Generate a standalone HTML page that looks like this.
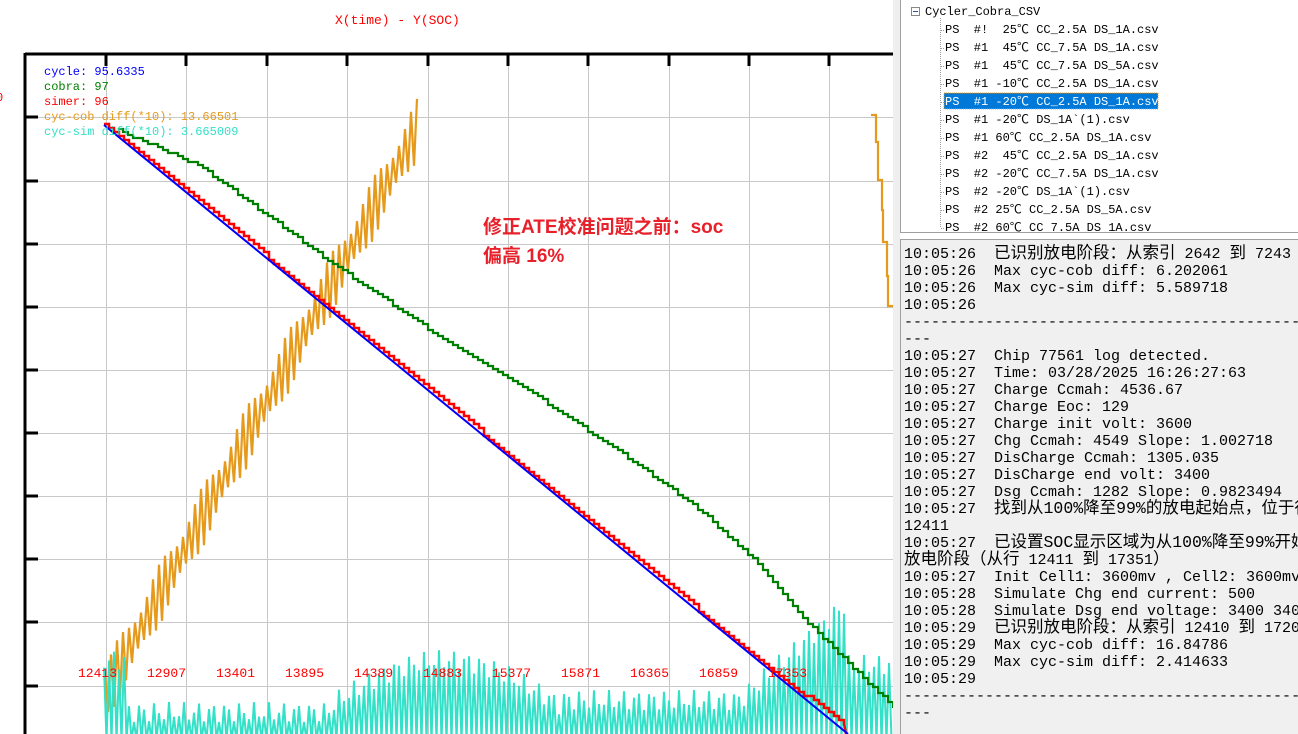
<!DOCTYPE html>
<html><head><meta charset="utf-8">
<style>
html,body{margin:0;padding:0;width:1298px;height:734px;overflow:hidden;background:#fff;position:relative}
.mono{font-family:"Liberation Mono","Noto Sans CJK SC",monospace}
#tree{position:absolute;left:900px;top:0;width:398px;height:232px;border-left:1px solid #a0a0a0;border-bottom:1px solid #a0a0a0;background:#fff;overflow:hidden}
#tree div{position:absolute;font-size:12px;line-height:16px;white-space:pre;color:#000}
#log{position:absolute;left:900px;top:239px;width:398px;height:495px;border-left:1px solid #a0a0a0;border-top:1px solid #a0a0a0;background:#f0f0f0;overflow:hidden}
#log pre{margin:0;position:absolute;left:3px;top:6px;font-size:15px;line-height:17px;color:#000;font-family:"Liberation Mono","Noto Sans CJK SC",monospace}
#log pre span{font-size:16.5px;line-height:0}
#strip{position:absolute;left:893px;top:0;width:7px;height:734px;background:#efefef}
</style></head><body>
<svg id="chart" width="893" height="734" style="position:absolute;left:0;top:0" xmlns="http://www.w3.org/2000/svg">
<g id="grid" stroke="#c8c8c8" stroke-width="1"></g>
<g id="data"></g>
<line x1="25" y1="54" x2="893" y2="54" stroke="#000" stroke-width="3"/>
<line x1="25" y1="53" x2="25" y2="734" stroke="#000" stroke-width="3"/>
<g id="ticks" stroke="#000" stroke-width="3"></g>
<text x="335" y="24" fill="#ff0000" font-family="Liberation Mono,monospace" font-size="13">X(time) - Y(SOC)</text>
<text x="-4" y="101" fill="#ff0000" font-family="Liberation Mono,monospace" font-size="12">0</text>
<g font-family="Liberation Mono,monospace" font-size="12">
<text x="44" y="75" fill="#0000ff">cycle: 95.6335</text>
<text x="44" y="90" fill="#008000">cobra: 97</text>
<text x="44" y="105" fill="#ff0000">simer: 96</text>
<text x="44" y="120" fill="#e59a1c">cyc-cob diff(*10): 13.66501</text>
<text x="44" y="135" fill="#33e0c8">cyc-sim diff(*10): 3.665009</text>
</g>
<g id="xl" font-family="Liberation Mono,monospace" font-size="13" fill="#ff0000"></g>
<text x="483" y="233" fill="#e8202a" font-family="Liberation Sans,Noto Sans CJK SC,sans-serif" font-weight="bold" font-size="19">修正ATE校准问题之前：soc</text>
<text x="483" y="262" fill="#e8202a" font-family="Liberation Sans,Noto Sans CJK SC,sans-serif" font-weight="bold" font-size="19">偏高 16%</text>
</svg>
<div id="strip"></div>
<div id="tree" class="mono">
<svg width="398" height="232" style="position:absolute;left:0;top:0">
<rect x="10.5" y="7.5" width="8" height="8" fill="#fff" stroke="#888"/>
<line x1="12" y1="11.5" x2="17" y2="11.5" stroke="#3050a0"/>
<line x1="39.5" y1="18" x2="39.5" y2="227" stroke="#a0a0a0" stroke-dasharray="1,1"/>
<g id="tl" stroke="#a0a0a0" stroke-dasharray="1,1"></g>
<rect x="43" y="93" width="214" height="16" fill="#0078d7" stroke="#e0a040" stroke-dasharray="1,1"/>
</svg>
<div style="left:24px;top:4px">Cycler_Cobra_CSV</div>
<div style="left:44px;top:22px">PS  #!  25℃ CC_2.5A DS_1A.csv</div>
<div style="left:44px;top:40px">PS  #1  45℃ CC_7.5A DS_1A.csv</div>
<div style="left:44px;top:58px">PS  #1  45℃ CC_7.5A DS_5A.csv</div>
<div style="left:44px;top:76px">PS  #1 -10℃ CC_2.5A DS_1A.csv</div>
<div style="left:44px;top:94px;color:#fff">PS  #1 -20℃ CC_2.5A DS_1A.csv</div>
<div style="left:44px;top:112px">PS  #1 -20℃ DS_1A`(1).csv</div>
<div style="left:44px;top:130px">PS  #1 60℃ CC_2.5A DS_1A.csv</div>
<div style="left:44px;top:148px">PS  #2  45℃ CC_2.5A DS_1A.csv</div>
<div style="left:44px;top:166px">PS  #2 -20℃ CC_7.5A DS_1A.csv</div>
<div style="left:44px;top:184px">PS  #2 -20℃ DS_1A`(1).csv</div>
<div style="left:44px;top:202px">PS  #2 25℃ CC_2.5A DS_5A.csv</div>
<div style="left:44px;top:220px">PS  #2 60℃ CC 7.5A DS 1A.csv</div>
</div>
<div id="log"><pre>10:05:26  <span>已识别放电阶段：从索引</span> 2642 <span>到</span> 7243
10:05:26  Max cyc-cob diff: 6.202061
10:05:26  Max cyc-sim diff: 5.589718
10:05:26
--------------------------------------------------
---
10:05:27  Chip 77561 log detected.
10:05:27  Time: 03/28/2025 16:26:27:63
10:05:27  Charge Ccmah: 4536.67
10:05:27  Charge Eoc: 129
10:05:27  Charge init volt: 3600
10:05:27  Chg Ccmah: 4549 Slope: 1.002718
10:05:27  DisCharge Ccmah: 1305.035
10:05:27  DisCharge end volt: 3400
10:05:27  Dsg Ccmah: 1282 Slope: 0.9823494
10:05:27  <span>找到从100%降至99%的放电起始点，位于行</span>
12411
10:05:27  <span>已设置SOC显示区域为从100%降至99%开始</span>
<span>放电阶段（从行</span> 12411 <span>到</span> 17351<span>）</span>
10:05:27  Init Cell1: 3600mv , Cell2: 3600mv
10:05:28  Simulate Chg end current: 500
10:05:28  Simulate Dsg end voltage: 3400 3400
10:05:29  <span>已识别放电阶段：从索引</span> 12410 <span>到</span> 17200
10:05:29  Max cyc-cob diff: 16.84786
10:05:29  Max cyc-sim diff: 2.414633
10:05:29
--------------------------------------------------
---</pre></div>
<script>
var NS="http://www.w3.org/2000/svg";
function el(p,t,a){var e=document.createElementNS(NS,t);for(var k in a)e.setAttribute(k,a[k]);p.appendChild(e);return e;}
var g=document.getElementById('grid'),tk=document.getElementById('ticks'),d=document.getElementById('data');
var ys=[117,181,244,307,370,433,496,559,622,686],xs=[106,186,267,347,428,508,588,669,749,829];
ys.forEach(function(y){el(g,'line',{x1:25,y1:y+.5,x2:893,y2:y+.5});el(tk,'line',{x1:25,y1:y,x2:38,y2:y});});
xs.forEach(function(x){el(g,'line',{x1:x+.5,y1:54,x2:x+.5,y2:734});el(tk,'line',{x1:x,y1:54,x2:x,y2:66});});
var xl=document.getElementById('xl');
['12413','12907','13401','13895','14389','14883','15377','15871','16365','16859','17353'].forEach(function(s,i){var t=el(xl,'text',{x:78+i*69,y:677});t.textContent=s;});
var p=[];for(var x=105;x<=418;x+=3){var f=(x-105)/313;var b=690-f*565;var a=((x/3)%2==0)?26:-20;var w=Math.sin(x*0.9)*8;p.push(x+','+(b+a+w));}
el(d,'polyline',{points:p.join(' '),fill:'none',stroke:'#e59a1c','stroke-width':2.2});
el(d,'polyline',{points:'871,115 876,115 876,142 878,142 878,180 882,180 882,210 883,210 883,242 887,242 887,276 888,276 888,306 893,306',fill:'none',stroke:'#e59a1c','stroke-width':2.2});
function peak(x){if(x<125)return 660;if(x<330)return 712;if(x<560)return 705-Math.sin((x-330)/230*Math.PI)*45;if(x<740)return 700;if(x<845)return 700-(x-740)/105*95;return 665;}
p=[];for(var x=104;x<=893;x+=2.5){var up=(Math.round(x/2.5)%2==0);var pk=peak(x)+Math.sin(x*1.7)*10;p.push(x+','+(up?pk:740));}
el(d,'polyline',{points:p.join(' '),fill:'none',stroke:'#33e0c8','stroke-width':2});
var gp=[[118,130],[200,166],[260,210],[330,262],[430,330],[520,385],[620,452],[700,510],[760,565],[810,625],[850,665],[893,707]];
function interp(pts,x){for(var i=0;i<pts.length-1;i++){if(x<=pts[i+1][0]){var t=(x-pts[i][0])/(pts[i+1][0]-pts[i][0]);return pts[i][1]+t*(pts[i+1][1]-pts[i][1]);}}return pts[pts.length-1][1];}
p=[];var py=null;for(var x=118;x<=893;x+=5){var y=Math.round(interp(gp,x)/3)*3;if(py!==null)p.push(x+','+py);p.push(x+','+y);py=y;}
el(d,'polyline',{points:p.join(' '),fill:'none',stroke:'#008000','stroke-width':2.2});
function blue(x){return 125+(x-104)*609/744;}
p=[];py=null;for(var x=104;x<=846;x+=5){var y=blue(x)-2;if(x>770){y=blue(770)-2+(x-770)*((728-blue(770))/76);}y=Math.round(y/4)*4;if(py!==null)p.push(x+','+py);p.push(x+','+y);py=y;}
p.push('846,734');
el(d,'polyline',{points:p.join(' '),fill:'none',stroke:'#ff0000','stroke-width':2.5});
el(d,'line',{x1:104,y1:125,x2:848,y2:734,stroke:'#0000ff','stroke-width':2});
var tl=document.getElementById('tl');for(var i=0;i<12;i++){el(tl,'line',{x1:40,y1:30.5+i*18,x2:44,y2:30.5+i*18});}
</script>
</body></html>
